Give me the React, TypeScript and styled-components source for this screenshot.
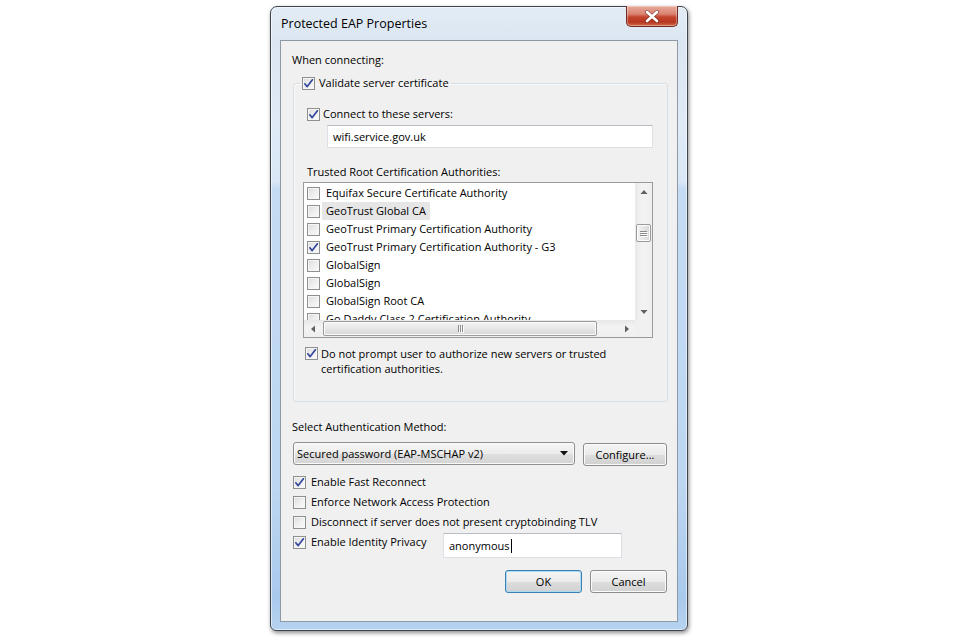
import React from "react";
import styled, { createGlobalStyle } from "styled-components";

const GlobalStyle = createGlobalStyle`
  html, body { margin: 0; padding: 0; background: #ffffff; }
  body { font-family: "Open Sans", "Noto Sans", sans-serif; font-size: 11px; color: #000; }
  * { box-sizing: border-box; }
`;

const Page = styled.div`
  width: 960px;
  height: 640px;
  display: flex;
  justify-content: center;
  align-items: flex-start;
  padding: 6px 2px 0 0;
  overflow: hidden;
`;

const Window = styled.div`
  width: 418px;
  height: 625px;
  border: 1px solid #3d444c;
  border-radius: 7px 7px 6px 6px;
  background: linear-gradient(
    to bottom,
    #e3ecf6 0px,
    #dbe6f2 34px,
    #dfeaf6 120px,
    #d9e7f6 175px,
    #c4dbf3 182px,
    #bdd6f1 480px,
    #a9c9ec 590px,
    #b7d3f0 625px
  );
  box-shadow: 1px 2px 4px rgba(0, 0, 0, 0.45), inset 0 0 0 1px rgba(255, 255, 255, 0.55);
  padding: 0 9px 8px;
  display: flex;
  flex-direction: column;
`;

const TitleBar = styled.div`
  height: 33px;
  display: flex;
  justify-content: space-between;
  align-items: flex-start;
`;

const Title = styled.div`
  font-size: 12.5px;
  line-height: 16px;
  margin: 9px 0 0 1px;
  color: #000;
`;

const CloseButton = styled.div`
  width: 52px;
  height: 21px;
  margin-top: -1px;
  border: 1px solid #6f2a22;
  border-top: none;
  border-radius: 0 0 5px 5px;
  background: linear-gradient(
    to bottom,
    #e9a99b 0%,
    #d98472 40%,
    #c4452f 55%,
    #b7361f 80%,
    #cf6a4e 100%
  );
  box-shadow: inset 0 0 0 1px rgba(255, 255, 255, 0.35);
  display: flex;
  align-items: center;
  justify-content: center;
`;

const Client = styled.div`
  height: 582px;
  background: #f0f0f0;
  border: 1px solid #8d99a6;
  padding: 11px 9px 0 11px;
  display: flex;
  flex-direction: column;
`;

const Label = styled.div<{ $indent?: number; $mt?: number }>`
  line-height: 16px;
  margin-left: ${(p) => p.$indent ?? 0}px;
  margin-top: ${(p) => p.$mt ?? 0}px;
  white-space: nowrap;
`;

const Group = styled.fieldset`
  margin: 7px 0 0 1px;
  padding: 15px 14px 25px 9px;
  border: 1px solid #d5dfe5;
  border-radius: 3px;
  box-shadow: inset 1px 1px 0 #fafafa;
  min-width: 0;
`;

const Legend = styled.legend`
  padding: 0 2px;
  margin-left: -3px;
`;

const CheckRow = styled.div<{ $gap?: number; $indent?: number; $mt?: number; $lh?: number }>`
  display: flex;
  align-items: flex-start;
  gap: ${(p) => p.$gap ?? 4}px;
  margin-left: ${(p) => p.$indent ?? 0}px;
  margin-top: ${(p) => p.$mt ?? 0}px;
  line-height: ${(p) => p.$lh ?? 16}px;
  white-space: nowrap;
`;

const Box = styled.span<{ $top?: number }>`
  flex: none;
  width: 13px;
  height: 13px;
  margin-top: ${(p) => p.$top ?? 1.5}px;
  border: 1px solid #8e8f8f;
  background: linear-gradient(135deg, #d9d9d9 0%, #ededed 45%, #fbfbfb 100%);
  box-shadow: inset 0 0 0 1px #f6f6f6;
  display: flex;
  align-items: center;
  justify-content: center;
`;

const TextBox = styled.div<{ $w: number; $h: number; $indent?: number; $mt?: number }>`
  width: ${(p) => p.$w}px;
  height: ${(p) => p.$h}px;
  margin-left: ${(p) => p.$indent ?? 0}px;
  margin-top: ${(p) => p.$mt ?? 0}px;
  background: #fff;
  border: 1px solid #dbdfe6;
  border-top-color: #b9bdc5;
  padding: 0 5px;
  display: flex;
  align-items: center;
  line-height: 16px;
  flex: none;
`;

const Caret = styled.span`
  display: inline-block;
  width: 1px;
  height: 14px;
  background: #000;
  margin-left: 1px;
`;

const ListBox = styled.div`
  width: 350px;
  height: 156px;
  margin-top: 2px;
  border: 1px solid #9a9a9a;
  background: #fff;
  display: grid;
  grid-template-columns: 1fr 17px;
  grid-template-rows: 1fr 17px;
`;

const Items = styled.div`
  overflow: hidden;
  padding: 1px 0 0 3px;
`;

const ItemRow = styled.div`
  height: 18px;
  display: flex;
  align-items: center;
  gap: 2px;
  white-space: nowrap;
`;

const ItemText = styled.span<{ $selected?: boolean }>`
  padding: 0 4px;
  line-height: 18px;
  background: ${(p) => (p.$selected ? "#e6e6e6" : "transparent")};
`;

const VScroll = styled.div`
  background: linear-gradient(to right, #e8e8e8, #f3f3f3 40%, #efefef);
  display: flex;
  flex-direction: column;
`;

const HScroll = styled.div`
  background: linear-gradient(to bottom, #e8e8e8, #f3f3f3 40%, #efefef);
  display: flex;
`;

const Corner = styled.div`
  background: #f0f0f0;
`;

const ArrowCell = styled.div`
  flex: none;
  width: 17px;
  height: 17px;
  display: flex;
  align-items: center;
  justify-content: center;
`;

const Track = styled.div<{ $vertical?: boolean }>`
  flex: 1;
  display: flex;
  flex-direction: ${(p) => (p.$vertical ? "column" : "row")};
`;

const Thumb = styled.div<{ $vertical?: boolean; $offset: number; $size: number }>`
  ${(p) =>
    p.$vertical
      ? `width: 15px; height: ${p.$size}px; margin: ${p.$offset}px 0 0 1px;
         background: linear-gradient(to right, #f4f4f4, #e7e7e7 50%, #d6d6d6);`
      : `height: 15px; width: ${p.$size}px; margin: 1px 0 0 ${p.$offset}px;
         background: linear-gradient(to bottom, #f4f4f4, #e7e7e7 50%, #d6d6d6);`}
  border: 1px solid #9b9b9b;
  border-radius: 2px;
  box-shadow: inset 0 0 0 1px #fbfbfb;
  display: flex;
  align-items: center;
  justify-content: center;
`;

const Grip = styled.div<{ $vertical?: boolean }>`
  display: flex;
  flex-direction: ${(p) => (p.$vertical ? "column" : "row")};
  gap: 1px;
  & > span {
    display: block;
    background: #8a8a8a;
    box-shadow: 1px 1px 0 #fff;
    ${(p) => (p.$vertical ? "width: 7px; height: 1px;" : "width: 1px; height: 7px;")}
  }
`;

const PromptText = styled.div`
  line-height: 15px;
`;

const MethodRow = styled.div`
  display: flex;
  align-items: flex-start;
  gap: 8px;
  margin: 7px 1px 0 1px;
`;

const Combo = styled.div`
  flex: 1;
  height: 23px;
  border: 1px solid #8f8f8f;
  border-radius: 3px;
  background: linear-gradient(to bottom, #f6f6f6 0%, #ececec 50%, #dfdfdf 51%, #d4d4d4 100%);
  box-shadow: inset 0 0 0 1px #fafafa;
  display: flex;
  align-items: center;
  justify-content: space-between;
  padding: 0 6px 0 3px;
`;

const Button = styled.div<{ $default?: boolean; $mt?: number }>`
  width: ${(p) => (p.$default !== undefined ? 77 : 84)}px;
  height: 23px;
  margin-top: ${(p) => p.$mt ?? 0}px;
  border: 1px solid ${(p) => (p.$default ? "#3c7fb1" : "#8c8c8c")};
  border-radius: 3px;
  background: linear-gradient(to bottom, #f4f4f4 0%, #ebebeb 50%, #dddddd 51%, #d1d1d1 100%);
  box-shadow: inset 0 0 0 1px ${(p) => (p.$default ? "#a9dbf6" : "#fbfbfb")};
  display: flex;
  align-items: center;
  justify-content: center;
  flex: none;
`;

const Options = styled.div`
  display: flex;
  flex-direction: column;
  margin: 6px 0 0 1px;
`;

const OptionRow = styled.div`
  display: flex;
  align-items: flex-start;
`;

const OptionLabel = styled(CheckRow)`
  width: 150px;
  height: 20px;
  padding-top: 2px;
`;

const ButtonRow = styled.div`
  display: flex;
  justify-content: flex-end;
  gap: 8px;
  margin: 12px 1px 0 0;
`;

const CheckMark = () => (
  <svg width="11" height="11" viewBox="0 0 11 11">
    <path d="M1.8 5.8 L4.2 8.6 L9.4 1.8" fill="none" stroke="#33479c" strokeWidth="1.7" strokeLinecap="round" strokeLinejoin="round" />
  </svg>
);

const Check = ({ checked, top }: { checked?: boolean; top?: number }) => (
  <Box $top={top}>{checked ? <CheckMark /> : null}</Box>
);

const Tri = ({ dir }: { dir: "up" | "down" | "left" | "right" }) => {
  const pts = {
    up: "0.5,5 4,1 7.5,5",
    down: "0.5,1 4,5 7.5,1",
    left: "5,0.5 1,4 5,7.5",
    right: "1,0.5 5,4 1,7.5",
  }[dir];
  const vertical = dir === "up" || dir === "down";
  return (
    <svg width={vertical ? 8 : 6} height={vertical ? 6 : 8} viewBox={vertical ? "0 0 8 6" : "0 0 6 8"}>
      <polygon points={pts} fill="#606060" />
    </svg>
  );
};

const certs: { name: string; checked?: boolean; selected?: boolean }[] = [
  { name: "Equifax Secure Certificate Authority" },
  { name: "GeoTrust Global CA", selected: true },
  { name: "GeoTrust Primary Certification Authority" },
  { name: "GeoTrust Primary Certification Authority - G3", checked: true },
  { name: "GlobalSign" },
  { name: "GlobalSign" },
  { name: "GlobalSign Root CA" },
  { name: "Go Daddy Class 2 Certification Authority" },
];

const options = [
  { label: "Enable Fast Reconnect", checked: true },
  { label: "Enforce Network Access Protection" },
  { label: "Disconnect if server does not present cryptobinding TLV" },
];

export default function App() {
  return (
    <>
      <GlobalStyle />
      <Page>
        <Window>
          <TitleBar>
            <Title>Protected EAP Properties</Title>
            <CloseButton>
              <svg width="16" height="13" viewBox="0 0 16 13">
                <path d="M3 2 L13 11 M13 2 L3 11" stroke="#5a2a24" strokeWidth="4.2" strokeLinecap="round" opacity="0.55" />
                <path d="M3 2 L13 11 M13 2 L3 11" stroke="#ffffff" strokeWidth="2.6" strokeLinecap="round" />
              </svg>
            </CloseButton>
          </TitleBar>
          <Client>
            <Label>When connecting:</Label>
            <Group>
              <Legend>
                <CheckRow $gap={4}>
                  <Check checked />
                  <span>Validate server certificate</span>
                </CheckRow>
              </Legend>
              <CheckRow $gap={3} $indent={4}>
                <Check checked />
                <span>Connect to these servers:</span>
              </CheckRow>
              <TextBox $w={326} $h={23} $indent={24} $mt={3}>
                wifi.service.gov.uk
              </TextBox>
              <Label $indent={4} $mt={16}>
                Trusted Root Certification Authorities:
              </Label>
              <ListBox>
                <Items>
                  {certs.map((c, i) => (
                    <ItemRow key={i}>
                      <Check checked={c.checked} top={0} />
                      <ItemText $selected={c.selected}>{c.name}</ItemText>
                    </ItemRow>
                  ))}
                </Items>
                <VScroll>
                  <ArrowCell>
                    <Tri dir="up" />
                  </ArrowCell>
                  <Track $vertical>
                    <Thumb $vertical $offset={24} $size={18}>
                      <Grip $vertical>
                        <span />
                        <span />
                        <span />
                      </Grip>
                    </Thumb>
                  </Track>
                  <ArrowCell>
                    <Tri dir="down" />
                  </ArrowCell>
                </VScroll>
                <HScroll>
                  <ArrowCell>
                    <Tri dir="left" />
                  </ArrowCell>
                  <Track>
                    <Thumb $offset={2} $size={274}>
                      <Grip>
                        <span />
                        <span />
                        <span />
                      </Grip>
                    </Thumb>
                  </Track>
                  <ArrowCell>
                    <Tri dir="right" />
                  </ArrowCell>
                </HScroll>
                <Corner />
              </ListBox>
              <CheckRow $gap={3} $indent={2} $mt={8} $lh={15}>
                <Check checked top={1} />
                <PromptText>
                  Do not prompt user to authorize new servers or trusted
                  <br />
                  certification authorities.
                </PromptText>
              </CheckRow>
            </Group>
            <Label $mt={17}>Select Authentication Method:</Label>
            <MethodRow>
              <Combo>
                <span>Secured password (EAP-MSCHAP v2)</span>
                <svg width="8" height="5" viewBox="0 0 8 5">
                  <polygon points="0,0 8,0 4,4.5" fill="#111" />
                </svg>
              </Combo>
              <Button $mt={1}>Configure...</Button>
            </MethodRow>
            <Options>
              {options.map((o) => (
                <OptionLabel key={o.label} $gap={5}>
                  <Check checked={o.checked} />
                  <span>{o.label}</span>
                </OptionLabel>
              ))}
              <OptionRow>
                <OptionLabel $gap={5}>
                  <Check checked />
                  <span>Enable Identity Privacy</span>
                </OptionLabel>
                <TextBox $w={179} $h={25} $mt={1}>
                  anonymous
                  <Caret />
                </TextBox>
              </OptionRow>
            </Options>
            <ButtonRow>
              <Button $default>OK</Button>
              <Button $default={false}>Cancel</Button>
            </ButtonRow>
          </Client>
        </Window>
      </Page>
    </>
  );
}
